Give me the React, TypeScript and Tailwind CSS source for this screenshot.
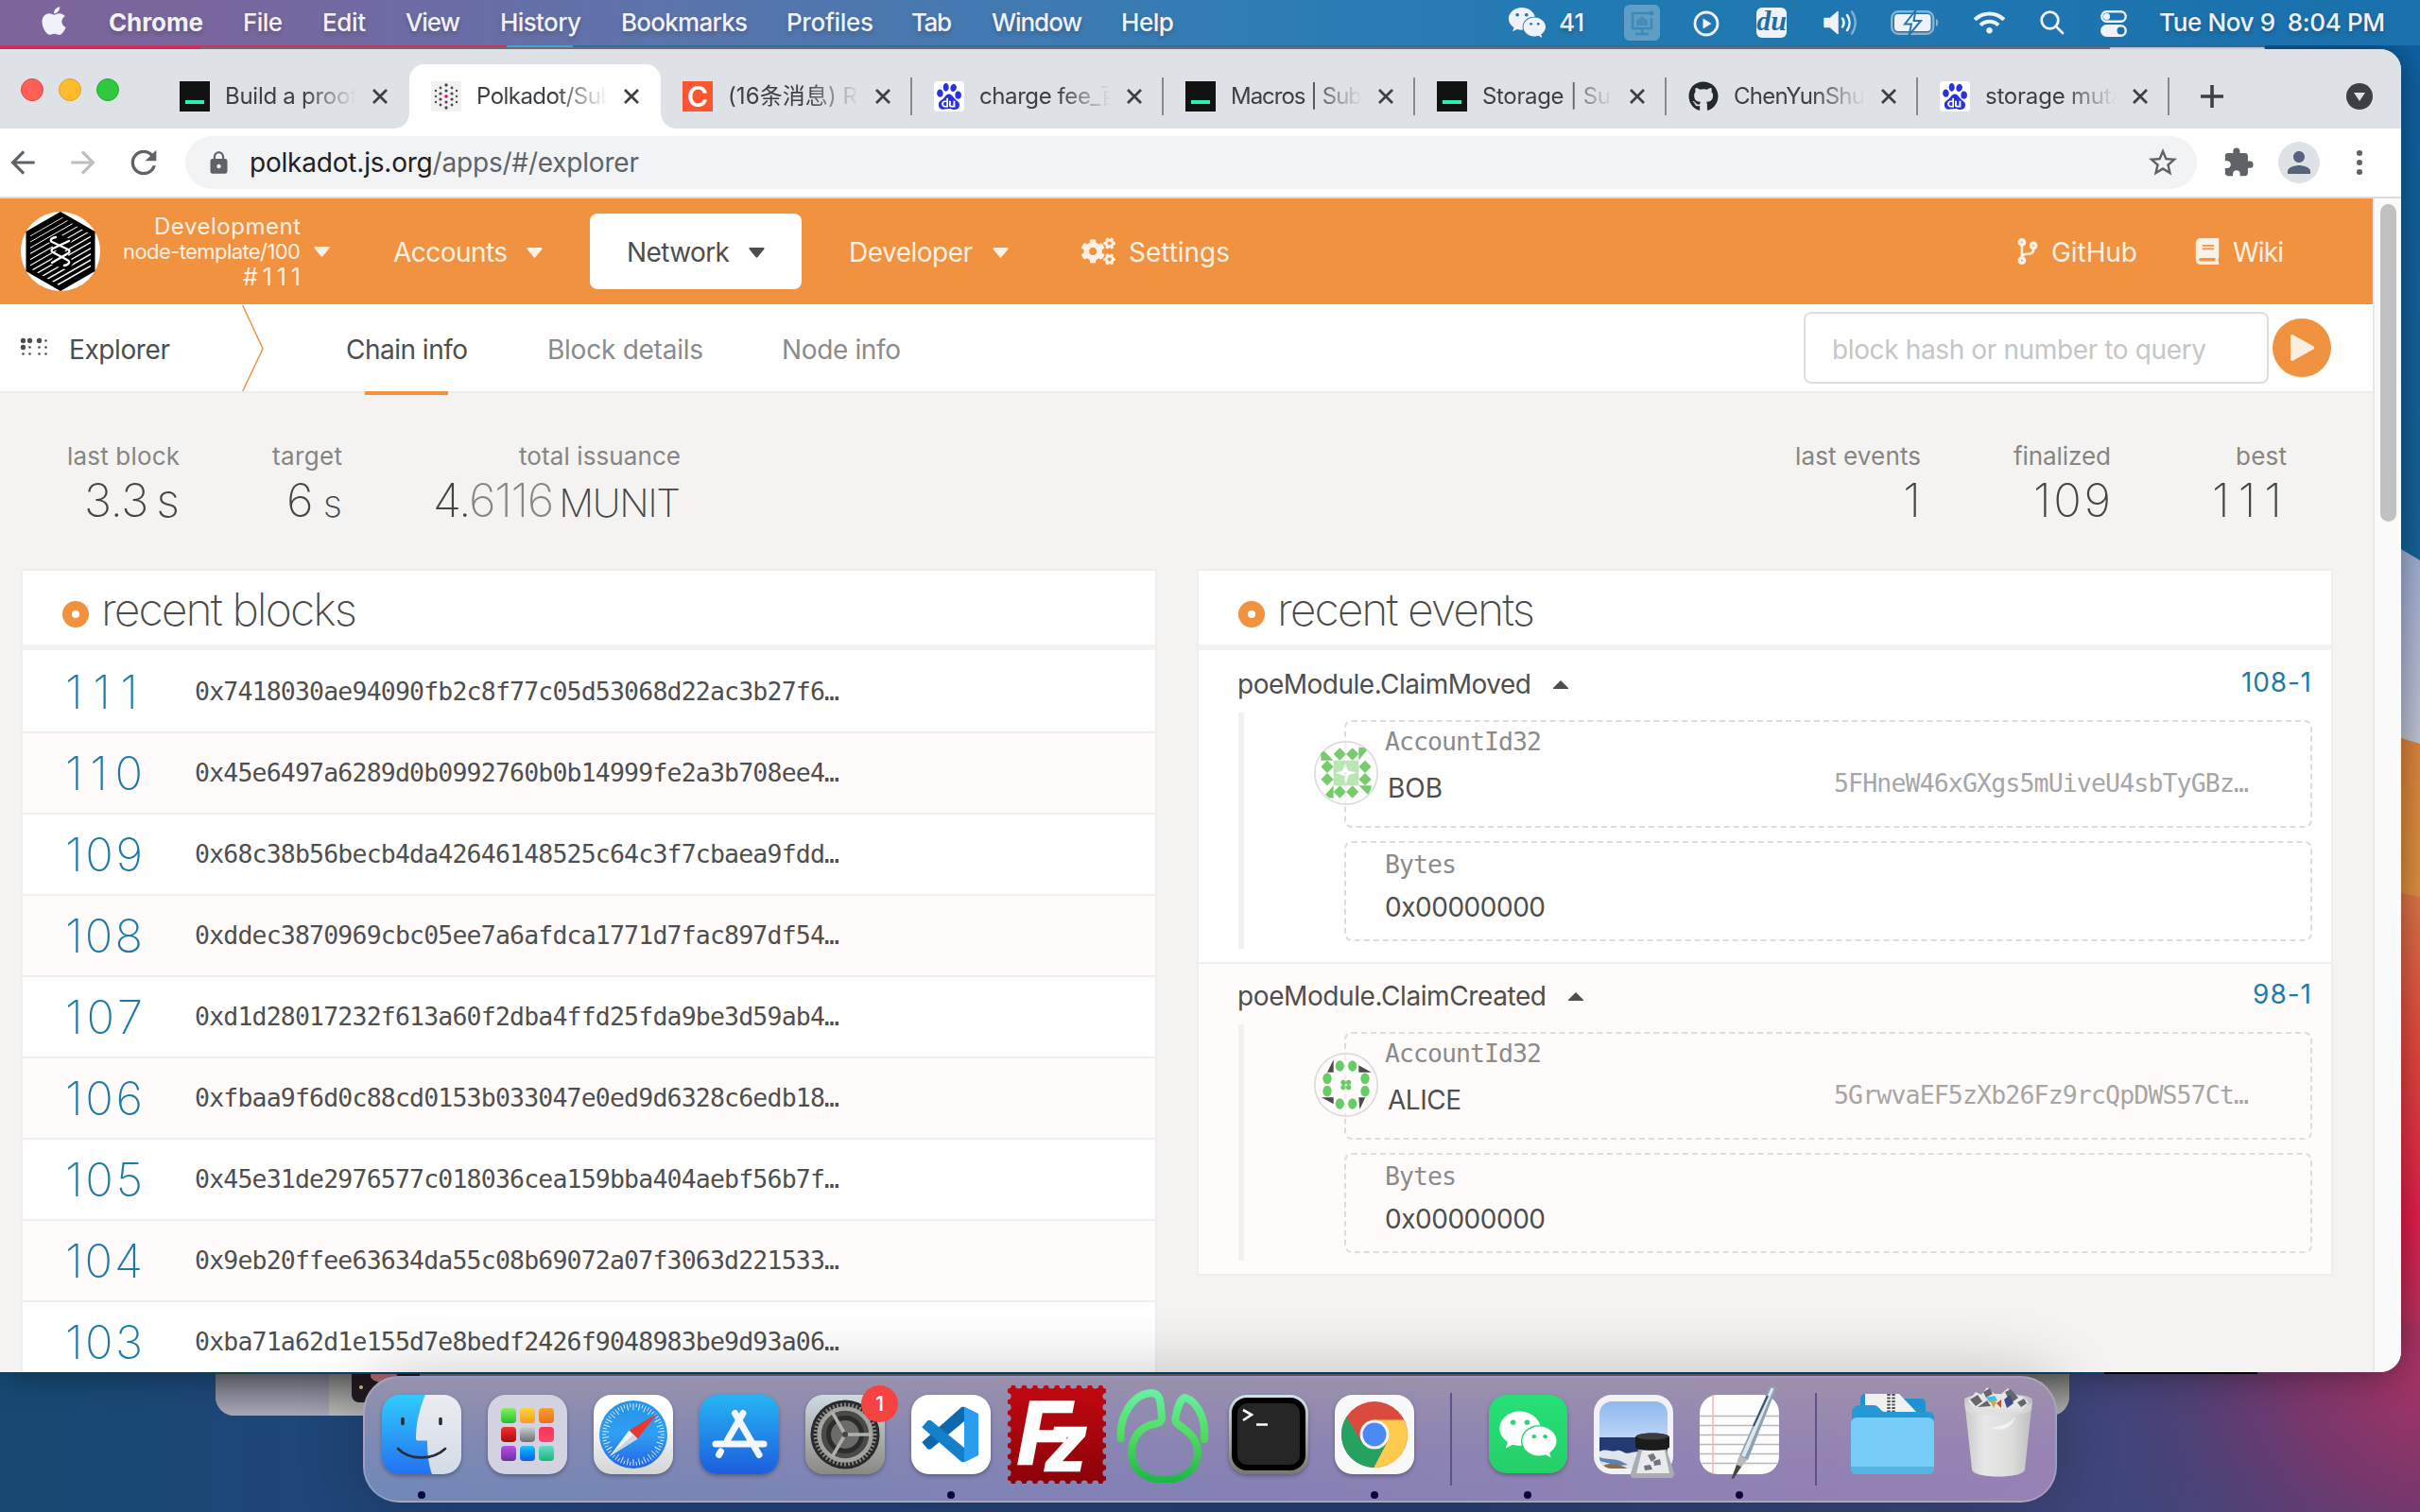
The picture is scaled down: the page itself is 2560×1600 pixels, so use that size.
import { useLayoutEffect, useRef, type ReactNode } from "react";
import { FaApple, FaGithub, FaCogs, FaCodeBranch, FaBook, FaWeixin, FaWifi } from "react-icons/fa";
import { MdExtension, MdStarBorder, MdLock, MdRefresh, MdPerson, MdArrowBack, MdArrowForward } from "react-icons/md";
import { SiBaidu } from "react-icons/si";

/* Single line of text whose tracking is adjusted so that it fills the given width. */
function Fit({ w, className = "", children }: { w: number; className?: string; children: ReactNode }) {
  const ref = useRef<HTMLSpanElement>(null);
  useLayoutEffect(() => {
    const el = ref.current;
    if (!el) return;
    el.style.letterSpacing = "0px";
    const gaps = (el.textContent || "").length - 1;
    if (gaps < 1) return;
    const tracking = (w - el.getBoundingClientRect().width) / gaps;
    el.style.letterSpacing = tracking + "px";
    el.style.marginRight = -tracking + "px";
  }, [w]);
  return (
    <span ref={ref} className={"inline-block shrink-0 whitespace-pre " + className}>
      {children}
    </span>
  );
}

function Caret({ className = "" }: { className?: string }) {
  return (
    <svg viewBox="0 0 17 11" className={"mt-[1px] h-[11px] w-[17px] shrink-0 " + className} fill="currentColor">
      <path d="M1.500 0h14c1 0 1.400 1 .8 1.700L9.300 10.200c-.5.6-1.200.6-1.700 0L.7 1.700C.1 1 .5 0 1.500 0z" />
    </svg>
  );
}

/* ---------- Menu bar ---------- */

function MenuItem({ w, ml, children }: { w: number; ml: string; children: string }) {
  return (
    <div className={ml}>
      <Fit w={w} className={children === "Chrome" ? "font-bold" : "font-medium"}>
        {children}
      </Fit>
    </div>
  );
}

function MenuBar() {
  return (
    <div className="flex h-[48px] w-full items-center bg-[linear-gradient(to_right,#7d659a_0%,#7668a0_12%,#5b74ac_28%,#4579b1_40%,#2f7db5_52%,#227ab2_65%,#1a70ac_100%)] text-[26px] leading-[48px] text-[#f1f2f8] [text-shadow:0_3px_5px_rgba(0,0,0,0.22)]">
      <FaApple className="mb-[4px] ml-[42px] h-[34px] w-[30px]" />
      <MenuItem ml="ml-[43px]" w={100}>Chrome</MenuItem>
      <MenuItem ml="ml-[42px]" w={42}>File</MenuItem>
      <MenuItem ml="ml-[42px]" w={46}>Edit</MenuItem>
      <MenuItem ml="ml-[42px]" w={58}>View</MenuItem>
      <MenuItem ml="ml-[42px]" w={86}>History</MenuItem>
      <MenuItem ml="ml-[42px]" w={134}>Bookmarks</MenuItem>
      <MenuItem ml="ml-[41px]" w={92}>Profiles</MenuItem>
      <MenuItem ml="ml-[40px]" w={43}>Tab</MenuItem>
      <MenuItem ml="ml-[42px]" w={96}>Window</MenuItem>
      <MenuItem ml="ml-[41px]" w={56}>Help</MenuItem>
      <div className="flex-1" />
      <FaWeixin className="h-[40px] w-[41px]" />
      <div className="ml-[13px] w-[31px]"><Fit w={27} className="font-medium">41</Fit></div>
      <svg viewBox="0 0 38 38" className="ml-[38px] h-[38px] w-[38px]">
        <rect width="38" height="38" rx="6" fill="#ffffff" opacity=".28" />
        <g fill="none" stroke="#1d6da6" strokeOpacity=".45" strokeWidth="2.500">
          <path d="M27 9H9v16h20V14M19 26v5M12 31h14" />
        </g>
        <path d="M13 22v-5l6-5 6 5v5z" fill="#1d6da6" opacity=".35" />
        <circle cx="29" cy="9" r="2.500" fill="#1d6da6" opacity=".5" />
      </svg>
      <svg viewBox="0 0 28 28" className="mt-[2px] ml-[35px] h-[28px] w-[28px]" fill="none" stroke="currentColor" strokeWidth="2.800">
        <circle cx="14" cy="14" r="12" />
        <path d="M10.500 8.500v11l9-5.500z" fill="currentColor" stroke="none" />
      </svg>
      <div className="ml-[39px] h-[32px] w-[32px] rounded-[6px] bg-[#f1f2f8] text-center font-['Liberation_Serif',serif] text-[30px] leading-[27px] font-bold text-[#1d6da6] italic [text-shadow:none]">du</div>
      <svg viewBox="0 0 38 28" className="ml-[39px] h-[28px] w-[38px]" fill="none" stroke="currentColor" strokeWidth="2.600" strokeLinecap="round">
        <path d="M1 9.500h6L15 2.500v23L7 18.500H1z" fill="currentColor" stroke="currentColor" strokeWidth="1.500" strokeLinejoin="round" />
        <path d="M20 9.500a8 8 0 0 1 0 9M25 6a14 14 0 0 1 0 16" />
        <path d="M30 2.500a20 20 0 0 1 0 23" opacity=".45" />
      </svg>
      <svg viewBox="0 0 52 26" className="ml-[33px] h-[26px] w-[52px]">
        <rect x="1.200" y="1.200" width="44" height="23.600" rx="7" fill="none" stroke="#f1f2f8" strokeOpacity=".5" strokeWidth="2.400" />
        <rect x="4" y="4" width="38.500" height="18" rx="4" fill="#f1f2f8" />
        <path d="M48 9c3 1 3 7 0 8z" fill="#f1f2f8" opacity=".5" />
        <path d="M26.500 0L15 14.500h7L19.500 26 32 11h-7.500z" fill="#f1f2f8" stroke="#2276b0" strokeWidth="2" />
      </svg>
      <FaWifi className="ml-[36px] h-[30px] w-[33px]" />
      <svg viewBox="0 0 26 26" className="ml-[37px] h-[26px] w-[26px]" fill="none" stroke="currentColor" strokeWidth="2.800" strokeLinecap="round">
        <circle cx="10.500" cy="10.500" r="8.800" />
        <path d="M17 17l7 7" />
      </svg>
      <svg viewBox="0 0 28 28" className="mt-[2px] ml-[38px] h-[28px] w-[28px]">
        <rect x="1.300" y="1.300" width="25.400" height="10.400" rx="5.200" fill="none" stroke="#f1f2f8" strokeWidth="2.400" />
        <circle cx="6.500" cy="6.500" r="3.600" fill="#f1f2f8" />
        <rect x="0" y="15" width="28" height="13" rx="6.500" fill="#f1f2f8" />
        <circle cx="21.500" cy="21.500" r="4" fill="#1a70ac" />
      </svg>
      <div className="ml-[34px] w-[276px]"><Fit w={239} className="font-medium">Tue Nov 9  8:04 PM</Fit></div>
    </div>
  );
}

/* ---------- Browser chrome ---------- */

function SubstrateIcon() {
  return (
    <div className="flex h-[32px] w-[32px] items-end justify-center bg-[#111212] pb-[8px]">
      <div className="h-[4px] w-[20px] bg-[#2df0b4]" />
    </div>
  );
}

function PolkadotIcon() {
  const dots = [
    [16, 4, 1.700], [16, 28, 1.700], [10, 7, 1.400], [22, 7, 1.400], [16, 10, 1.600], [5, 10, 1.200], [27, 10, 1.200],
    [10, 13, 1.600], [22, 13, 1.600], [5, 16, 1.200], [27, 16, 1.200], [10, 19, 1.600], [22, 19, 1.600],
    [16, 22, 1.600], [5, 22, 1.200], [27, 22, 1.200], [10, 25, 1.400], [22, 25, 1.400],
  ];
  return (
    <svg viewBox="0 0 32 32" className="h-[32px] w-[32px] bg-[#f1f1f2]">
      {dots.map(([x, y, r], i) => <circle key={i} cx={x} cy={y} r={r} fill="#4a4a4a" />)}
      <circle cx="16" cy="16" r="1.800" fill="#e6007a" />
    </svg>
  );
}

function BaiduIcon() {
  return (
    <div className="flex h-[32px] w-[32px] items-center justify-center rounded-[4px] bg-white">
      <SiBaidu className="h-[28px] w-[28px] text-[#2a32e0]" />
    </div>
  );
}

function CsdnIcon() {
  return <div className="h-[32px] w-[32px] bg-[#fc5531] text-center text-[30px] leading-[32px] font-semibold text-white">C</div>;
}

function Tab({ icon, title, w, active, divider }: { icon: ReactNode; title: string; w: number; active?: boolean; divider?: boolean }) {
  return (
    <div className={"relative flex h-[68px] w-[266px] shrink-0 items-center rounded-t-[16px] pl-[23px] " + (active ? "bg-white" : "")}>
      {active && (
        <>
          <div className="absolute bottom-0 -left-[16px] h-[16px] w-[16px] bg-[radial-gradient(circle_at_0_0,transparent_15.5px,#ffffff_16px)]" />
          <div className="absolute -right-[16px] bottom-0 h-[16px] w-[16px] bg-[radial-gradient(circle_at_100%_0,transparent_15.5px,#ffffff_16px)]" />
        </>
      )}
      {icon}
      <div className="ml-[16px] w-[139px] overflow-hidden text-[24px] leading-[40px] text-[#3c4043] [mask-image:linear-gradient(to_right,#000_60%,transparent_100%)]">
        <Fit w={w}>{title}</Fit>
      </div>
      <svg viewBox="0 0 16 16" className="ml-[17px] h-[16px] w-[16px]" stroke="#3c4043" strokeWidth="2.800">
        <path d="M1 1l14 14M15 1L1 15" />
      </svg>
      {divider && <div className="ml-[21px] h-[40px] w-[2px] bg-[#868a8f]" />}
    </div>
  );
}

function TabStrip() {
  return (
    <div className="flex h-[84px] items-end bg-[#dee1e6]">
      <div className="mb-[29px] ml-[22px] flex w-[145px] gap-[16px]">
        <div className="h-[24px] w-[24px] rounded-full border border-[#e0443e] bg-[#fe5f57]" />
        <div className="h-[24px] w-[24px] rounded-full border border-[#dfa023] bg-[#febb2e]" />
        <div className="h-[24px] w-[24px] rounded-full border border-[#1dad2b] bg-[#30c840]" />
      </div>
      <Tab icon={<SubstrateIcon />} title="Build a proof" w={141} />
      <Tab active icon={<PolkadotIcon />} title="Polkadot/Sub" w={146} />
      <Tab divider icon={<CsdnIcon />} title="(16条消息) R" w={137} />
      <Tab divider icon={<BaiduIcon />} title="charge fee_百" w={152} />
      <Tab divider icon={<SubstrateIcon />} title="Macros | Sub" w={139} />
      <Tab divider icon={<SubstrateIcon />} title="Storage | Su" w={136} />
      <Tab divider icon={<FaGithub className="h-[32px] w-[32px] text-[#24292e]" />} title="ChenYunShu" w={139} />
      <Tab divider icon={<BaiduIcon />} title="storage muta" w={147} />
      <svg viewBox="0 0 24 24" className="mb-[22px] ml-[33px] h-[24px] w-[24px]" stroke="#3c4043" strokeWidth="3.600">
        <path d="M0 12h24M12 0v24" />
      </svg>
      <svg viewBox="0 0 28 28" className="mb-[20px] ml-auto mr-[30px] h-[28px] w-[28px]">
        <circle cx="14" cy="14" r="14" fill="#3c4043" />
        <path d="M8 10h12l-6 9z" fill="#dee1e6" />
      </svg>
    </div>
  );
}

function Toolbar() {
  return (
    <div className="flex h-[74px] items-center border-b-2 border-[#dcdcdd] bg-white text-[#5f6368]">
      <MdArrowBack className="ml-[5px] h-[38px] w-[38px]" />
      <MdArrowForward className="ml-[26px] h-[38px] w-[38px] text-[#bcbec1]" />
      <MdRefresh className="ml-[25px] h-[40px] w-[40px]" />
      <div className="ml-[24px] flex h-[56px] w-[2128px] items-center rounded-full bg-[#f1f3f4]">
        <MdLock className="ml-[22px] h-[27px] w-[27px]" />
        <div className="ml-[19px] w-[421px] text-[28px] leading-[56px]">
          <Fit w={412}><span className="text-[#202124]">polkadot.js.org</span>/apps/#/explorer</Fit>
        </div>
        <MdStarBorder className="mr-[18px] ml-auto h-[36px] w-[36px]" />
      </div>
      <MdExtension className="ml-[27px] h-[34px] w-[34px]" />
      <div className="ml-[25px] flex h-[44px] w-[44px] items-center justify-center rounded-full bg-[#dee1e6]">
        <MdPerson className="h-[36px] w-[36px] text-[#56637a]" />
      </div>
      <div className="ml-[39px] flex flex-col gap-[4px]">
        <div className="h-[6px] w-[6px] rounded-full bg-[#5f6368]" />
        <div className="h-[6px] w-[6px] rounded-full bg-[#5f6368]" />
        <div className="h-[6px] w-[6px] rounded-full bg-[#5f6368]" />
      </div>
    </div>
  );
}

/* ---------- Page ---------- */

function NodeLogo() {
  const lines = Array.from({ length: 19 }, (_, i) => i);
  return (
    <svg viewBox="0 0 84 84" className="ml-[22px] h-[84px] w-[84px]">
      <defs>
        <clipPath id="hexClip"><path d="M42 5L74 24V60L42 79 10 60V24z" /></clipPath>
      </defs>
      <circle cx="42" cy="42" r="42" fill="#fff" />
      <path d="M42 0L78.500 21v42L42 84 5.500 63V21z" fill="#000" />
      <g clipPath="url(#hexClip)" stroke="#fff">
        {lines.map((i) => (
          <path key={i} d={`M8 ${i * 6.200 - 4}L76 ${i * 6.200 - 43}`} strokeWidth={0.500 + i * 0.070} />
        ))}
      </g>
      <path d="M38 23L55 30 46 41 56 54 50 62 30 55 38 42 29 31z" fill="#000" />
      <g fill="none" stroke="#fff" strokeWidth="2.300" strokeLinecap="round" strokeLinejoin="round">
        <path d="M37 27c-6 1-6 4-4 5l17 8c2 1 2 3 0 4L33 54" />
        <path d="M51 31L34 39c-2 1-2 3 0 4l15 8c4 2 2 5-3 6" />
      </g>
    </svg>
  );
}

function Header() {
  return (
    <div className="flex h-[112px] items-center bg-[#f19240] text-[28px] text-[#fdf0e5]">
      <NodeLogo />
      <div className="flex w-[212px] flex-col items-end pt-[1px] text-[24px] leading-[27px]">
        <Fit w={155}>Development</Fit>
        <Fit w={188} className="text-[22px]">node-template/100</Fit>
        <Fit w={61} className="text-[25px]">#111</Fit>
      </div>
      <Caret className="ml-[14px]" />
      <div className="ml-[67px] flex w-[208px] items-center pt-[1px]">
        <Fit w={121}>Accounts</Fit>
        <Caret className="ml-[20px]" />
      </div>
      <div className="flex h-[80px] w-[224px] items-center rounded-[8px] bg-white pt-[1px] pl-[39px] text-[#4e4e4e]">
        <Fit w={109}>Network</Fit>
        <Caret className="ml-[20px]" />
      </div>
      <div className="ml-[50px] flex w-[246px] items-center pt-[1px]">
        <Fit w={131}>Developer</Fit>
        <Caret className="ml-[21px]" />
      </div>
      <FaCogs className="h-[30px] w-[36px]" />
      <div className="ml-[14px] pt-[1px]"><Fit w={107}>Settings</Fit></div>
      <FaCodeBranch className="ml-auto h-[28px] w-[24px]" />
      <div className="ml-[13px] w-[152px] pt-[1px]"><Fit w={91}>GitHub</Fit></div>
      <FaBook className="h-[28px] w-[26px]" />
      <div className="mr-[94px] ml-[14px] w-[54px] pt-[1px]"><Fit w={54}>Wiki</Fit></div>
    </div>
  );
}

function GridIcon() {
  const dots = [
    [2.500, 2.500, 2.700], [9.500, 2.500, 2.700], [19.500, 2.500, 2.700], [26.500, 2.500, 1.300],
    [2.500, 9.500, 2.700], [9.500, 9.500, 1.300], [19.500, 9.500, 1.300], [26.500, 9.500, 1.300],
    [2.500, 16.500, 1.300], [9.500, 16.500, 1.300], [19.500, 16.500, 1.300], [26.500, 16.500, 1.300],
  ];
  return (
    <svg viewBox="0 0 29 19" className="mb-[2px] ml-[22px] h-[19px] w-[29px] overflow-visible" fill="#4e4e4e">
      {dots.map(([x, y, r], i) => <circle key={i} cx={x} cy={y} r={r} />)}
    </svg>
  );
}

function SubNav() {
  return (
    <div className="flex h-[92px] items-center bg-white text-[28px] leading-[88px] text-[#4e4e4e]">
      <GridIcon />
      <div className="ml-[22px] w-[183px] pt-[4px]"><Fit w={107}>Explorer</Fit></div>
      <svg viewBox="0 0 24 92" className="h-[92px] w-[24px]" fill="none" stroke="#f19240" strokeWidth="1.500">
        <path d="M.7 1L22 47 .7 92" />
      </svg>
      <div className="relative ml-[86px] w-[213px] pt-[4px]">
        <Fit w={129}>Chain info</Fit>
        <div className="absolute -bottom-[4px] left-[20px] h-[4px] w-[88px] bg-[#f19240]" />
      </div>
      <div className="w-[248px] pt-[4px] text-[#8b8b8b]"><Fit w={165}>Block details</Fit></div>
      <div className="pt-[4px] text-[#8b8b8b]"><Fit w={126}>Node info</Fit></div>
      <div className="ml-auto flex h-[76px] w-[492px] items-center rounded-[8px] border-2 border-[#dededf] bg-white pl-[28px]">
        <Fit w={396} className="pt-[4px] leading-[60px] text-[#c6c6c6]">block hash or number to query</Fit>
      </div>
      <div className="mr-[44px] ml-[4px] flex h-[62px] w-[62px] items-center justify-center rounded-full bg-[#f19240]">
        <svg viewBox="0 0 26 28" className="ml-[1px] h-[28px] w-[26px]" fill="#fdeee2">
          <path d="M0 2C0 .5 1.500-.5 3 .5L24 12.300c1.500 1 1.500 2.500 0 3.500L3 27.600C1.500 28.400 0 27.500 0 26z" />
        </svg>
      </div>
    </div>
  );
}

function Stat({ width, label, labelW, children }: { width: string; label: string; labelW: number; children: ReactNode }) {
  return (
    <div className={"flex flex-col items-end " + width}>
      <Fit w={labelW} className="text-[26px] leading-[40px] text-[#868583]">{label}</Fit>
      <div className="text-[49px] leading-[53px] font-extralight text-[#454544]">{children}</div>
    </div>
  );
}

function Summary() {
  return (
    <div className="flex h-[186px] pt-[47px]">
      <Stat width="w-[190px]" label="last block" labelW={119}>
        <Fit w={101}>3.3<span className="-ml-[5px]"> s</span></Fit>
      </Stat>
      <Stat width="w-[172px]" label="target" labelW={74}><Fit w={59}>6 <span className="text-[40px]">s</span></Fit></Stat>
      <Stat width="w-[358px]" label="total issuance" labelW={171}>
        <Fit w={262}>4.<span className="text-[#858583]">6116</span><span className="-ml-[4px] text-[41px]"> MUNIT</span></Fit>
      </Stat>
      <div className="flex-1" />
      <Stat width="w-[200px]" label="last events" labelW={133}><Fit w={22}>1</Fit></Stat>
      <Stat width="w-[201px]" label="finalized" labelW={103}><Fit w={82}>109</Fit></Stat>
      <Stat width="w-[186px]" label="best" labelW={54}><Fit w={79} className="pr-[5px]">111</Fit></Stat>
      <div className="w-[91px]" />
    </div>
  );
}

function PanelTitle({ w, children }: { w: number; children: string }) {
  return (
    <div className="flex h-[84px] items-center border-b-[6px] border-[#f3f2f1] pl-[42px]">
      <div className="mt-[14px] flex h-[28px] w-[28px] items-center justify-center rounded-full bg-[#f19240]">
        <div className="h-[8px] w-[8px] rounded-full bg-white" />
      </div>
      <div className="ml-[13px] pt-[3px] text-[48px] leading-[60px] font-extralight text-[#4b4b4a]">
        <Fit w={w}>{children}</Fit>
      </div>
    </div>
  );
}

const blocks: [string, number, string][] = [
  ["111", 77, "0x7418030ae94090fb2c8f77c05d53068d22ac3b27f6…"],
  ["110", 82, "0x45e6497a6289d0b0992760b0b14999fe2a3b708ee4…"],
  ["109", 82, "0x68c38b56becb4da42646148525c64c3f7cbaea9fdd…"],
  ["108", 82, "0xddec3870969cbc05ee7a6afdca1771d7fac897df54…"],
  ["107", 82, "0xd1d28017232f613a60f2dba4ffd25fda9be3d59ab4…"],
  ["106", 82, "0xfbaa9f6d0c88cd0153b033047e0ed9d6328c6edb18…"],
  ["105", 82, "0x45e31de2976577c018036cea159bba404aebf56b7f…"],
  ["104", 82, "0x9eb20ffee63634da55c08b69072a07f3063d221533…"],
  ["103", 82, "0xba71a62d1e155d7e8bedf2426f9048983be9d93a06…"],
];

function RecentBlocks() {
  return (
    <div className="w-[1202px] border-2 border-[#efeeed] bg-white">
      <PanelTitle w={271}>recent blocks</PanelTitle>
      <div className="pt-[2px]">
        {blocks.map(([n, w, hash]) => (
          <div key={n} className="flex h-[86px] items-center border-b-2 border-[#efeeee] pl-[45px] odd:bg-white even:bg-[#fffbfa]">
            <div className="w-[137px] pt-[2px] text-[49px] leading-[60px] font-extralight text-[#1f7ba6]"><Fit w={w}>{n}</Fit></div>
            <Fit w={682} className="mb-[1px] font-['DejaVu_Sans_Mono',monospace] text-[26.500px] leading-[40px] text-[#4e4e4e]">{hash}</Fit>
          </div>
        ))}
      </div>
    </div>
  );
}

function BobIdenticon() {
  const cells = [[62, 22], [102, 22], [62, 142], [102, 142], [22, 62], [22, 102], [142, 62], [142, 102]];
  return (
    <g fill="#76cb6c">
      <path d="M62 62H142V142H62z" fill="#bbe5b5" />
      <path d="M99 70l8 24 29 7-26 7-9 30-6-28-27-8 23-8z" fill="#fff" />
      {cells.map(([x, y], i) => <path key={i} d={`M${x + 20} ${y}l20 20-20 20-20-20z`} />)}
      <path d="M62 62H22V38L32 32zM142 62V20L157 21 168 29zM142 142h40l-1 12-10 16zM62 142v40l-14-1-12-10z" />
    </g>
  );
}

function AliceIdenticon() {
  const spots = [[82, 42], [122, 42], [42, 82], [42, 122], [162, 82], [162, 122], [82, 162], [122, 162]];
  return (
    <g fill="#66cc66">
      {spots.map(([x, y], i) => <ellipse key={i} cx={x} cy={y} rx="14" ry="17.500" />)}
      <path d="M62 22V62H42zM142 40v22h40zM142 142h21l-18 38zM62 142v21L24 142z" fill="#4b4b4b" />
      <g><circle cx="93" cy="94" r="8" /><circle cx="110" cy="94" r="8" /><circle cx="93" cy="110" r="8" /><circle cx="110" cy="110" r="8" /></g>
      <path d="M93 94h17v16H93z" />
      <circle cx="102" cy="102" r="4" fill="#fffbfa" />
    </g>
  );
}

function EventBlock({ title, titleW, id, idW, who, whoW, address, odd }: {
  title: string; titleW: number; id: string; idW: number; who: string; whoW: number; address: string; odd?: boolean;
}) {
  return (
    <div className={"h-[330px] border-b-2 border-[#efeeee] pr-[20px] pl-[42px] text-[28px] text-[#4e4e4e] " + (odd ? "bg-[#fffbfa]" : "bg-white")}>
      <div className="flex h-[64px] items-center">
        <Fit w={titleW} className="-ml-[1px] pt-[4px] leading-[40px]">{title}</Fit>
        <svg viewBox="0 0 16 9" className="mt-[5px] ml-[23px] h-[9px] w-[16px]" fill="#4e4e4e"><path d="M8 0l8 8v1H0V8z" /></svg>
        <div className="mr-[1px] ml-auto text-[#1f7ba6]"><Fit w={idW}>{id}</Fit></div>
      </div>
      <div className="border-l-[6px] border-[#f2f1f1] pt-[8px] pb-[8px] pl-[106px]">
        <div className="relative h-[114px] rounded-[8px] border-2 border-dashed border-[#dcdcdc] pl-[41px]">
          <div className="-mt-[1px] h-[44px]">
            <Fit w={166} className="font-['DejaVu_Sans_Mono',monospace] text-[26.500px] leading-[40px] text-[#8b8b8b]">AccountId32</Fit>
          </div>
          <div className="flex h-[54px] items-center justify-between pr-[65px] pl-[3px]">
            <Fit w={whoW} className="leading-[48px]">{who}</Fit>
            <Fit w={439} className="mb-[11px] font-['DejaVu_Sans_Mono',monospace] text-[26.500px] leading-[40px] text-[#a6a6a6]">{address}</Fit>
          </div>
          <svg viewBox="0 0 204 204" className="absolute top-[20px] -left-[34px] h-[68px] w-[68px]">
            <circle cx="102" cy="102" r="99.500" fill={odd ? "#fffbfa" : "#fff"} stroke="#dddcdc" strokeWidth="5" />
            {odd ? <AliceIdenticon /> : <BobIdenticon />}
            <path d="M99 6V200" stroke="#dcdcdc" strokeWidth="4" strokeDasharray="18 13" opacity=".7" />
          </svg>
        </div>
        <div className="mt-[14px] h-[106px] rounded-[8px] border-2 border-dashed border-[#dcdcdc] pl-[41px]">
          <div className="h-[44px] pt-[1px]">
            <Fit w={76} className="font-['DejaVu_Sans_Mono',monospace] text-[26.500px] leading-[40px] text-[#8b8b8b]">Bytes</Fit>
          </div>
          <Fit w={170} className="leading-[48px]">0x00000000</Fit>
        </div>
      </div>
    </div>
  );
}

function RecentEvents() {
  return (
    <div className="w-[1202px] border-2 border-b-0 border-[#efeeed] bg-white">
      <PanelTitle w={273}>recent events</PanelTitle>
      <div className="pt-[2px]">
        <EventBlock title="poeModule.ClaimMoved" titleW={311} id="108-1" idW={74} who="BOB" whoW={58} address="5FHneW46xGXgs5mUiveU4sbTyGBz…" />
        <EventBlock odd title="poeModule.ClaimCreated" titleW={327} id="98-1" idW={62} who="ALICE" whoW={78} address="5GrwvaEF5zXb26Fz9rcQpDWS57Ct…" />
      </div>
    </div>
  );
}

function BrowserWindow() {
  return (
    <div className="absolute top-[52px] left-0 h-[1400px] w-[2540px] overflow-hidden rounded-tr-[22px] rounded-br-[22px] bg-[#f4f3f1] shadow-[0_0_40px_rgba(0,0,0,0.45)]">
      <TabStrip />
      <Toolbar />
      <div className="flex h-[1242px] overflow-hidden">
        <div className="w-[2510px] shrink-0">
          <Header />
          <SubNav />
          <div className="border-t-2 border-[#ededec]">
            <Summary />
            <div className="flex items-start gap-[42px] pl-[22px]">
              <RecentBlocks />
              <RecentEvents />
            </div>
          </div>
        </div>
        <div className="w-[30px] shrink-0 border-l-2 border-[#e8e8e8] bg-[#fafafa] pt-[6px] pl-[6px]">
          <div className="h-[336px] w-[17px] rounded-full bg-[#c1c1c1]" />
        </div>
      </div>
    </div>
  );
}

/* ---------- Desktop ---------- */

function Wallpaper() {
  return (
    <svg viewBox="0 0 2560 1600" className="absolute inset-0 h-[1600px] w-[2560px]">
      <defs>
        <linearGradient id="wBlue" x1="0" y1="0" x2="0" y2="1"><stop offset="0" stopColor="#0f62a6" /><stop offset="1" stopColor="#16649b" /></linearGradient>
        <linearGradient id="wLav" x1="0" y1="0" x2="0" y2="1"><stop offset="0" stopColor="#a3b0d8" /><stop offset="1" stopColor="#c6cbd8" /></linearGradient>
        <linearGradient id="wOr" x1="0" y1="0" x2="0" y2="1"><stop offset="0" stopColor="#e0873d" /><stop offset="1" stopColor="#e09442" /></linearGradient>
        <linearGradient id="wRed" x1="0" y1="0" x2="0" y2="1"><stop offset="0" stopColor="#e07748" /><stop offset=".35" stopColor="#e8483f" /><stop offset=".75" stopColor="#e51d4c" /><stop offset="1" stopColor="#b53260" /></linearGradient>
        <linearGradient id="wBot" x1="0" y1="0" x2="1" y2="0"><stop offset="0" stopColor="#174a73" /><stop offset=".2" stopColor="#23447a" /><stop offset=".6" stopColor="#27406f" /><stop offset="1" stopColor="#4b4a80" /></linearGradient>
        <radialGradient id="wGlow" cx="2600" cy="1400" r="400" gradientUnits="userSpaceOnUse"><stop offset="0" stopColor="#c2305f" /><stop offset=".5" stopColor="#7c3569" stopOpacity=".85" /><stop offset="1" stopColor="#4a3a70" stopOpacity="0" /></radialGradient>
      </defs>
      <rect width="2560" height="600" fill="url(#wBlue)" />
      <path d="M2540 581l20 12v220h-20z" fill="url(#wLav)" />
      <path d="M2540 781l20 6v180h-20z" fill="url(#wOr)" />
      <path d="M2540 945l20 4v460h-20z" fill="url(#wRed)" />
      <rect y="1400" width="2560" height="200" fill="url(#wBot)" />
      <rect x="2150" y="1400" width="410" height="200" fill="url(#wGlow)" />
    </svg>
  );
}

function BackWindows() {
  return (
    <>
      <div className="absolute top-[1400px] left-[228px] flex h-[98px] w-[1961px] overflow-hidden rounded-b-[20px] bg-[#8a8a88]">
        <div className="w-[120px] bg-linear-to-b from-[#6c6c78] from-55% to-[#a9a7b8]" />
        <div className="flex-1 bg-linear-to-b from-[#777775] from-55% to-[#bababa] pl-[24px]">
          <svg viewBox="0 0 72 84" className="h-[84px] w-[72px]">
            <rect width="72" height="84" rx="8" fill="#241c24" />
            <ellipse cx="34" cy="56" rx="14" ry="7" fill="#c77a83" />
            <circle cx="10" cy="68" r="2" fill="#d8cf8a" />
          </svg>
        </div>
      </div>
      <div className="absolute top-[1440px] left-[210px] flex h-[14px] w-[2026px] overflow-hidden rounded-b-[10px]">
        <div className="w-[58px] bg-[#11583f]" />
        <div className="flex-1 bg-[#0d5083]" />
      </div>
      <div className="absolute top-[1440px] left-[2226px] h-[14px] w-[162px] bg-black" />
    </>
  );
}

/* Sliver of the wallpaper and of the windows behind, between the menu bar and the browser. */
function TopSliver() {
  return (
    <div className="absolute inset-x-0 top-[48px] h-[4px]">
      <div className="flex h-[2px]">
        <div className="w-[536px] bg-[#d0315c]" />
        <div className="w-[70px] bg-[#4a9fd0]" />
        <div className="w-[1790px] bg-[#2a6c9c]" />
      </div>
      <div className="flex h-[2px]">
        <div className="w-[212px] bg-[#c5305a]" />
        <div className="w-[2020px] bg-[#6d6d72]" />
        <div className="w-[164px] rounded-tr-[4px] bg-[#c5cad1]" />
      </div>
    </div>
  );
}

function Slot({ dot, children }: { dot?: boolean; children: ReactNode }) {
  return (
    <div className="relative flex w-[112px] shrink-0 justify-center pt-[20px]">
      {children}
      {dot && <div className="absolute bottom-[2px] left-[52px] h-[8px] w-[8px] rounded-full bg-[#0a0740]" />}
    </div>
  );
}

function DockDivider() {
  return <div className="flex w-[50px] shrink-0 justify-center pt-[18px]"><div className="h-[98px] w-[2px] bg-[#5f5485]" /></div>;
}

const tile = "h-[84px] w-[84px] overflow-hidden rounded-[19px] shadow-[0_2px_4px_rgba(0,0,0,0.3)]";

function Finder() {
  return (
    <svg viewBox="0 0 84 84" className={tile}>
      <defs><linearGradient id="fBlue" x1="0" y1="0" x2="0" y2="1"><stop offset="0" stopColor="#2fccfb" /><stop offset="1" stopColor="#2571f2" /></linearGradient>
        <linearGradient id="fWh" x1="0" y1="0" x2="0" y2="1"><stop offset="0" stopColor="#ececf1" /><stop offset="1" stopColor="#d2dce6" /></linearGradient></defs>
      <rect width="84" height="84" fill="url(#fBlue)" />
      <path d="M46 0C40 14 36 30 36 46c0 2 1 2.500 2.500 2.500H48C48 62 49.500 74 53 84H84V0z" fill="url(#fWh)" />
      <g stroke="#2c2c33" strokeWidth="3.600" strokeLinecap="round" fill="none"><path d="M22 25.500v5M62 25.500v5" /><path d="M17 57c12 12.500 37 12.500 50 0" strokeWidth="2.600" /></g>
    </svg>
  );
}

function Launchpad() {
  return (
    <div className="grid h-[84px] w-[84px] grid-cols-[16px_16px_16px] content-start gap-x-[4px] gap-y-[4px] rounded-[19px] bg-[#d2d2e1] pt-[14px] pl-[14px] shadow-[0_2px_4px_rgba(0,0,0,0.3)]">
      <i className="h-[16px] w-[16px] rounded-[4px] bg-linear-to-b from-[#7df25f] to-[#1fc02a]" />
      <i className="h-[16px] w-[16px] rounded-[4px] bg-linear-to-b from-[#fcd436] to-[#f79b1f]" />
      <i className="h-[16px] w-[16px] rounded-[4px] bg-linear-to-b from-[#f8a12a] to-[#ee6b25]" />
      <i className="h-[16px] w-[16px] rounded-[4px] bg-linear-to-b from-[#f03030] to-[#a90c0c]" />
      <i className="h-[16px] w-[16px] rounded-[4px] bg-linear-to-b from-[#c9d1d6] to-[#6e6e6e]" />
      <i className="h-[16px] w-[16px] rounded-[4px] bg-linear-to-b from-[#fb2f5a] to-[#fa4a68]" />
      <i className="h-[16px] w-[16px] rounded-[4px] bg-linear-to-b from-[#b952e4] to-[#6f2ea4]" />
      <i className="h-[16px] w-[16px] rounded-[4px] bg-linear-to-b from-[#22c5fb] to-[#1a54f0]" />
      <i className="h-[16px] w-[16px] rounded-[4px] bg-linear-to-b from-[#5fdccb] to-[#15b57c]" />
    </div>
  );
}

function Safari() {
  const ticks = Array.from({ length: 60 }, (_, i) => i * 6);
  return (
    <svg viewBox="0 0 84 84" className={tile}>
      <defs><linearGradient id="sBg" x1="0" y1="0" x2="0" y2="1"><stop offset=".3" stopColor="#ffffff" /><stop offset="1" stopColor="#d4d4d4" /></linearGradient>
        <linearGradient id="sBl" x1="0" y1="0" x2="0" y2="1"><stop offset="0" stopColor="#2593e8" /><stop offset=".5" stopColor="#2ea0f3" /><stop offset="1" stopColor="#2463e6" /></linearGradient></defs>
      <rect width="84" height="84" fill="url(#sBg)" />
      <circle cx="42" cy="42" r="36" fill="url(#sBl)" />
      {ticks.map((a, i) => <path key={a} d={i % 2 ? "M42 9v4" : "M42 9v7"} transform={`rotate(${a} 42 42)`} stroke="#e8f3fd" strokeWidth=".9" />)}
      <path d="M67 20L37.500 37.500l9 9z" fill="#e9382f" />
      <path d="M17 65L37.500 37.500l9 9z" fill="#f1f4f7" />
      <path d="M17 65L42 42l4.500 4.500z" fill="#cfd5dc" />
    </svg>
  );
}

function AppStore() {
  return (
    <svg viewBox="0 0 84 84" className={tile}>
      <defs><linearGradient id="aBl" x1="0" y1="0" x2="0" y2="1"><stop offset="0" stopColor="#27b5f3" /><stop offset="1" stopColor="#1c5ddc" /></linearGradient></defs>
      <rect width="84" height="84" fill="url(#aBl)" />
      <g stroke="#f4f8fd" strokeWidth="7" strokeLinecap="round"><path d="M46 19.500L29.500 48" /><path d="M37.500 19.500L63 63.500" /><path d="M17 52h51" /><path d="M22.500 60l-2 3.500" /></g>
    </svg>
  );
}

function SysPrefs() {
  const teeth = Array.from({ length: 48 }, (_, i) => i * 7.500);
  return (
    <svg viewBox="0 0 84 84" className={tile}>
      <defs><linearGradient id="pBg" x1="0" y1="0" x2="0" y2="1"><stop offset="0" stopColor="#cfdbe0" /><stop offset="1" stopColor="#8b8883" /></linearGradient></defs>
      <rect width="84" height="84" fill="url(#pBg)" />
      <circle cx="42" cy="42" r="36.500" fill="#2a2a2a" />
      {teeth.map((a) => <path key={a} d="M42 8.500v4" transform={`rotate(${a} 42 42)`} stroke="#8e8e8e" strokeWidth="1.800" />)}
      <circle cx="42" cy="42" r="27.500" fill="#4a4a49" stroke="#a3a3a0" strokeWidth="4.500" />
      <circle cx="42" cy="42" r="17.500" fill="#6b6b69" stroke="#2c2c2c" strokeWidth="5" />
      <g stroke="#b0b0ac" strokeWidth="3.600"><path d="M42 42h27M42 42L28.500 18.600M42 42L28.500 65.400" /></g>
      <circle cx="42" cy="42" r="3" fill="#444" />
    </svg>
  );
}

function VsCode() {
  return (
    <svg viewBox="0 0 84 84" className={tile}>
      <rect width="84" height="84" fill="#fff" />
      <path d="M12 51l5 6c1.500 1 3 .8 4.500-.3L56 28V13c-2-.5-3 0-4 1L12 49.500c-1 .7-.8 1 0 1.500z" fill="#0f68ad" />
      <path d="M12 33.500l5-6c1.500-1 3-.8 4.500.3L56 56v15c-2 .5-3 0-4-1L12 35c-1-.7-.8-1 0-1.500z" fill="#157fcb" />
      <path d="M56 12.500L71 20v44L56 71.500z" fill="#2b9df0" />
    </svg>
  );
}

function FileZilla() {
  const holes = Array.from({ length: 10 }, (_, i) => i);
  return (
    <div className="relative -mt-[10px] h-[104px] w-[104px] shrink-0">
      <svg viewBox="0 0 104 104" className="h-[104px] w-[104px]">
        <defs>
          <linearGradient id="zRed" x1="0" y1="0" x2="0" y2="1"><stop offset="0" stopColor="#c30812" /><stop offset="1" stopColor="#8b0208" /></linearGradient>
          <mask id="zMask">
            <rect width="104" height="104" fill="#fff" />
            {holes.map((i) => (
              <g key={i} fill="#000">
                <circle cx={i * 11.600} cy="0" r="3.600" /><circle cx={i * 11.600} cy="104" r="3.600" />
                <circle cx="0" cy={i * 11.600} r="3.600" /><circle cx="104" cy={i * 11.600} r="3.600" />
              </g>
            ))}
          </mask>
        </defs>
        <rect width="104" height="104" fill="url(#zRed)" mask="url(#zMask)" />
        <text y="83" fill="#fff" stroke="#fff" strokeWidth="2.500" fontFamily="Liberation Sans" fontStyle="italic" fontWeight="700" fontSize="94">
          <tspan x="10">F</tspan>
          <tspan x="40" y="90" fontSize="86">z</tspan>
        </text>
      </svg>
    </div>
  );
}

function Navicat() {
  return (
    <svg viewBox="0 0 100 100" className="-mt-[7px] h-[100px] w-[100px] shrink-0">
      <defs><linearGradient id="nG" x1="0" y1="0" x2="0" y2="1"><stop offset="0" stopColor="#66f0a0" /><stop offset=".5" stopColor="#4fdc5c" /><stop offset="1" stopColor="#22b54a" /></linearGradient></defs>
      <g fill="none" stroke="url(#nG)" strokeWidth="8" strokeLinecap="round" strokeLinejoin="round">
        <path d="M5.500 53C4 30 18 6 38 5c9 0 10 8 11 27-1 5-4 5-9 6-14 3-23 15-23 30 0 18 14 29 34 29 22 0 36-12 36-29 0-14-9-21-17-27-6-4-8-6-6-12C66 18 70 10 74 10c12 4 22 22 20 44" />
      </g>
    </svg>
  );
}

function Terminal() {
  return (
    <div className="relative h-[84px] w-[84px] rounded-[19px] bg-linear-to-b from-[#cfe3ec] to-[#7c7672] p-[3px] shadow-[0_2px_4px_rgba(0,0,0,0.3)]">
      <div className="h-[77px] w-[78px] rounded-[16px] border-[6px] border-black bg-[#262626] pt-[5px] pl-[5px]">
        <svg viewBox="0 0 28 20" className="h-[20px] w-[28px]" fill="none" stroke="#fff" strokeWidth="2.600"><path d="M1 2l9 5-9 6M15 17.500h12" /></svg>
      </div>
    </div>
  );
}

function ChromeIcon() {
  return (
    <svg viewBox="0 0 84 84" className={tile}>
      <rect width="84" height="84" fill="#f8f8f8" />
      <circle cx="42" cy="42" r="35" fill="#db4a3f" />
      <path d="M42 26.500H73.300A35 35 0 0 1 41.200 77L55.500 49.700z" fill="#fecb4d" />
      <path d="M12.500 23.200A35 35 0 0 0 41.200 77L55.500 49.700 42 57 28.500 49.700z" fill="#25a162" />
      <circle cx="42" cy="42" r="15.500" fill="#f5f5f5" />
      <circle cx="42" cy="42" r="12.500" fill="#4a8af4" />
    </svg>
  );
}

function PreviewIcon() {
  return (
    <svg viewBox="0 0 90 90" className="h-[90px] w-[90px]">
      <defs><linearGradient id="vSky" x1="0" y1="0" x2="0" y2="1"><stop offset="0" stopColor="#8fb8ee" /><stop offset="1" stopColor="#bdd6f6" /></linearGradient>
        <clipPath id="vClip"><rect x="9" y="7" width="72" height="71" rx="13" /></clipPath></defs>
      <rect x="3" y="0" width="84" height="84" rx="19" fill="#f2f2f4" />
      <g clipPath="url(#vClip)">
        <rect x="9" y="7" width="72" height="39" fill="url(#vSky)" />
        <rect x="9" y="45" width="72" height="34" fill="#243a72" />
        <path d="M9 60c8-4 12 1 18-1s8 5 16 2 20 3 38 2v17H9z" fill="#dfe6ee" />
        <path d="M9 66c9 3 14 1 22 4l8 4-10 1-20-5z" fill="#5f80b0" />
        <path d="M9 78c6-6 16-7 30 0z" fill="#8c6b4a" />
      </g>
      <path d="M50 58h30l8 25c0 4-2 5-5 5H46c-3 0-5-1-4-5z" fill="#a9acb2" />
      <path d="M54 59h24l5 24H48z" fill="#e9eaec" />
      <path d="M60 64l6-2 3 5-5 4zM66 70l7-2 1 6-7 1zM56 75l7-1 2 5-8 1z" fill="#6e7480" />
      <path d="M47 45c0-6 36-6 36 0v10c0 5-36 5-36 0z" fill="#1b1b1c" />
      <ellipse cx="65" cy="44" rx="17" ry="3.500" fill="#3c3c3d" />
    </svg>
  );
}

function TextEdit() {
  return (
    <svg viewBox="0 0 90 108" className="-mt-[11px] h-[108px] w-[90px]">
      <rect x="3" y="11" width="84" height="84" rx="19" fill="#fdfdfd" />
      <g stroke="#b9b9bb" strokeWidth="1.600"><path d="M3 33.500h84M3 43.500h84M3 53.500h84M3 63.500h84M3 73.500h84M5 83.500h80" /></g>
      <path d="M17 11v84" stroke="#f7b4b4" strokeWidth="1.500" />
      <path d="M77 3c2-2 6-1 7 1.500L54 80l-9-4z" fill="#8fa1b0" />
      <path d="M78.500 3.500l3 1L51 77l-4-1.500z" fill="#dbe6ee" />
      <path d="M44.500 76l9 3.500-11 14-4 2z" fill="#b9b9ba" />
      <path d="M42 85l-5.500 15 2.500-.5L47 87z" fill="#4b4340" />
      <path d="M75 12L60 44" stroke="#39536b" strokeWidth="2" />
    </svg>
  );
}

function FolderIcon() {
  return (
    <svg viewBox="0 0 88 88" className="-mt-[2px] h-[88px] w-[88px]">
      <path d="M10 22V6c0-3 2-5 4-5h14c4 0 4 5 8 5h38c3 0 5 2 5 5v12z" fill="#1f93d1" />
      <path d="M15 22V1h36l20 21z" fill="#f1f1f1" />
      <path d="M45 1V22M40 1v21" stroke="#555" strokeWidth="3.500" strokeDasharray="2 1.500" />
      <path d="M1 22c0-6 3-9 8-9h15c6 0 7 7 12 7h46c4 0 6 3 6 6v20H1z" fill="#2599d6" />
      <rect x="0" y="26" width="88" height="60" rx="6" fill="#76cdf7" />
      <path d="M0 78h88v2c0 4-3 6-6 6H6c-3 0-6-2-6-6z" fill="#56b3e2" />
    </svg>
  );
}

function Trash() {
  return (
    <svg viewBox="0 0 76 98" className="-mt-[9px] h-[98px] w-[76px]">
      <defs><linearGradient id="tG" x1="0" y1="0" x2="1" y2="0"><stop offset="0" stopColor="#c9c9cb" /><stop offset=".3" stopColor="#e8e8e8" /><stop offset=".7" stopColor="#dcdcdb" /><stop offset="1" stopColor="#bdbcc0" /></linearGradient></defs>
      <path d="M2 14c2-8 70-8 72 0l-8 74c-1 10-55 10-56 0z" fill="url(#tG)" />
      <path d="M6 16l8-10 6 3 6-8 8 7 6 1 8-7 8 8 8 1 6 6-8 10H14z" fill="#e6e6e6" />
      <path d="M8 14l8-5 5 7-7 5zM22 6l7-4 3 6-7 4zM45 6l6-3 8 9-8 6zM58 17l7-4 3 5-6 4zM16 22l10-7 4 6z" fill="#66676c" />
      <path d="M25 12l9-2 3 5-8 2z" fill="#36c5e0" /><path d="M29 15l7 1-3 7z" fill="#d8a53b" /><path d="M44 14l6-5 4 9-7 5z" fill="#384f8e" /><path d="M36 18l5-4v9z" fill="#c2543c" />
      <path d="M2 16c6 11 66 11 72 0l-1 9c-6 8-64 8-70 0z" fill="#dedddd" opacity=".6" />
      <path d="M30 44c10-2 20-4 26-12-3 10-12 17-26 12z" fill="#f8f8f8" opacity=".8" />
    </svg>
  );
}

function Dock() {
  return (
    <div className="absolute top-[1456px] left-[384px] flex h-[134px] w-[1792px] rounded-[38px] border-2 border-[#ffffff30] bg-[linear-gradient(to_bottom,rgba(160,148,170,0.8),rgba(150,140,175,0.35)_55%,transparent),linear-gradient(to_right,#6f88b6,#8480b5_50%,#9780b5)] pl-[4px] shadow-[0_0_70px_rgba(0,0,0,0.24)]">
      <div className="-mt-[2px] flex">
        <Slot dot><Finder /></Slot>
        <Slot><Launchpad /></Slot>
        <Slot><Safari /></Slot>
        <Slot><AppStore /></Slot>
        <Slot>
          <SysPrefs />
          <div className="absolute top-[10px] right-0 h-[39px] w-[39px] rounded-full bg-[#f64240] text-center text-[22px] leading-[39px] font-medium text-white">1</div>
        </Slot>
        <Slot dot><VsCode /></Slot>
        <Slot><FileZilla /></Slot>
        <Slot><Navicat /></Slot>
        <Slot><Terminal /></Slot>
        <Slot dot><ChromeIcon /></Slot>
        <DockDivider />
        <Slot dot>
          <div className="flex h-[83px] w-[83px] items-center justify-center rounded-[19px] bg-linear-to-b from-[#26e077] to-[#25cf68] shadow-[0_2px_4px_rgba(0,0,0,0.3)]">
            <FaWeixin className="h-[62px] w-[63px] text-white" />
          </div>
        </Slot>
        <Slot><PreviewIcon /></Slot>
        <Slot dot><TextEdit /></Slot>
        <DockDivider />
        <Slot><FolderIcon /></Slot>
        <Slot><Trash /></Slot>
      </div>
    </div>
  );
}

export default function App() {
  return (
    <div className="relative h-[1600px] w-[2560px] overflow-hidden bg-[#1d426f] font-['Inter','Noto_Sans_CJK_SC',sans-serif]">
      <Wallpaper />
      <BackWindows />
      <BrowserWindow />
      <TopSliver />
      <div className="absolute inset-x-0 top-0"><MenuBar /></div>
      <Dock />
    </div>
  );
}
